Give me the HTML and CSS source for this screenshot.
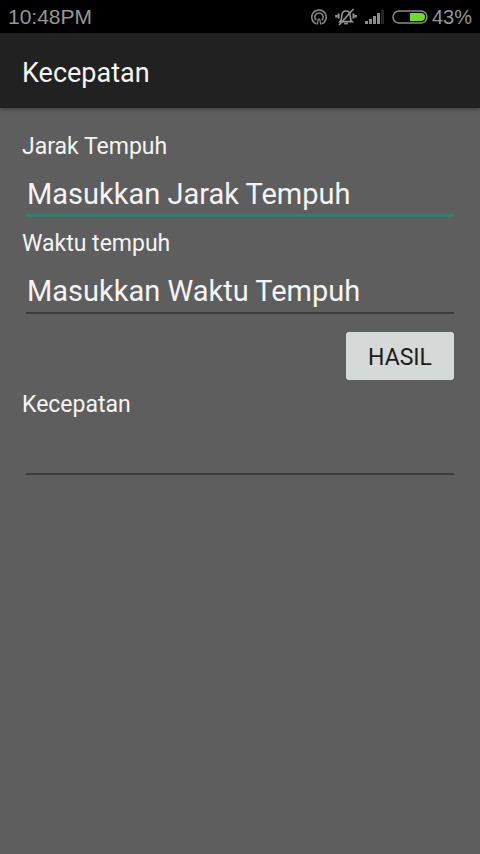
FILE: index.html
```html
<!DOCTYPE html>
<html lang="id">
<head>
    <meta charset="UTF-8">
    <meta name="viewport" content="width=device-width, initial-scale=1.0">
    <title>Kecepatan</title>
    <link rel="stylesheet" href="styles.css">
</head>
<body>

    <div class="status-bar">
        <span class="clock">10:48PM</span>
        <div class="status-icons">
            <svg class="icon-hotspot" width="16" height="18" viewBox="0 0 16 18" fill="none" stroke="#8c8c8c" stroke-width="1.5">
                <path d="M5.500 15.900a7.200 7.200 0 1 1 5 0"/>
                <path d="M5.300 12.300a4.200 4.200 0 1 1 5.400 0"/>
                <path d="M6.300 16.500 7.300 11h1.400l1 5.500" stroke-width="1.200"/>
            </svg>
            <svg class="icon-silent" width="22" height="18" viewBox="0 0 22 18" fill="none" stroke="#969696" stroke-width="1.6">
                <path d="M5 13.600c1.800-1.500 1.600-3.500 1.700-5.500C6.900 4.700 8.600 3 11 3s4.100 1.700 4.300 5.100c.1 2 0 4 1.700 5.500z"/>
                <path d="M9.200 15.600h3.600"/>
                <path d="M18.500 1 4 17"/>
                <path d="M3.500 5.500v5M1.200 7v2.500M18.500 5.500v5M20.800 7v2.500" stroke-width="2"/>
            </svg>
            <svg class="icon-signal" width="19" height="16" viewBox="0 0 19 16">
                <path fill="#8c8c8c" d="M0 12h3v3H0zM4 10h3v5H4zM8 7h3v8H8zM12 4h3v11h-3z"/>
                <path fill="#242424" d="M16 1h3v14h-3z"/>
            </svg>
            <svg class="icon-battery" width="36" height="14" viewBox="0 0 36 14">
                <rect x="1" y="1" width="34" height="12" rx="6" fill="none" stroke="#8c8c8c" stroke-width="1.500"/>
                <path fill="#6fdc2c" d="M18 3h11a4 4 0 0 1 0 8H18z"/>
            </svg>
            <span class="battery-level">43%</span>
        </div>
    </div>

    <header class="app-bar">
        <h1>Kecepatan</h1>
    </header>

    <form class="form" onsubmit="hitung(event)">
        <label for="jarak">Jarak Tempuh</label>
        <input class="field active" type="text" id="jarak" placeholder="Masukkan Jarak Tempuh">

        <label for="waktu">Waktu tempuh</label>
        <input class="field" type="text" id="waktu" placeholder="Masukkan Waktu Tempuh">

        <button type="submit">HASIL</button>

        <label for="kecepatan">Kecepatan</label>
        <input class="field" type="text" id="kecepatan">
    </form>

    <script>
        // kecepatan = jarak / waktu
        function hitung(event) {
            event.preventDefault();
            const jarak = parseFloat(document.getElementById('jarak').value);
            const waktu = parseFloat(document.getElementById('waktu').value);
            if (jarak >= 0 && waktu > 0) {
                document.getElementById('kecepatan').value = jarak / waktu;
            }
        }
    </script>
</body>
</html>
```

FILE: styles.css
```css
* {
    box-sizing: border-box;
}

body {
    margin: 0;
    min-height: 100vh;
    background-color: #5e5e5e;
    color: #f4f4f4;
    font-family: Roboto, sans-serif;
}

.status-bar {
    display: flex;
    justify-content: space-between;
    align-items: center;
    height: 33px;
    padding: 1px 8px 0;
    background-color: #000;
    color: #969696;
    font-family: "Liberation Sans", Arial, sans-serif;
}

.clock {
    font-size: 21px;
}

.status-icons {
    display: flex;
    align-items: center;
    gap: 8px;
}

.battery-level {
    margin-left: -4px;
    font-size: 20px;
}

.app-bar {
    display: flex;
    align-items: center;
    height: 75px;
    padding: 4px 22px 0;
    background-color: #212121;
    box-shadow: 0 1px 4px rgba(0, 0, 0, 0.4);
}

h1 {
    margin: 0;
    font-size: 27px;
    font-weight: 400;
}

.form {
    display: flex;
    flex-direction: column;
    padding: 25px 22px;
}

label {
    font-size: 23px;
    line-height: 28px;
}

.field {
    height: 56px;
    margin: 0 4px 13px;
    padding: 12px 0 0 1px;
    border: none;
    border-bottom: 2px solid #3c3c3c;
    background: none;
    color: #f4f4f4;
    font-family: inherit;
    font-size: 29px;
    outline: none;
}

.field::placeholder {
    color: #f4f4f4;
    opacity: 1;
}

.field.active,
.field:focus {
    border-bottom: 3px solid #3b7b70;
}

button {
    align-self: flex-end;
    width: 108px;
    height: 48px;
    margin: 5px 4px 11px;
    padding: 2px 0 0;
    border: none;
    border-radius: 3px;
    background-color: #d5d9d8;
    color: #1c1c1c;
    font-family: inherit;
    font-size: 23px;
    cursor: pointer;
}
```
